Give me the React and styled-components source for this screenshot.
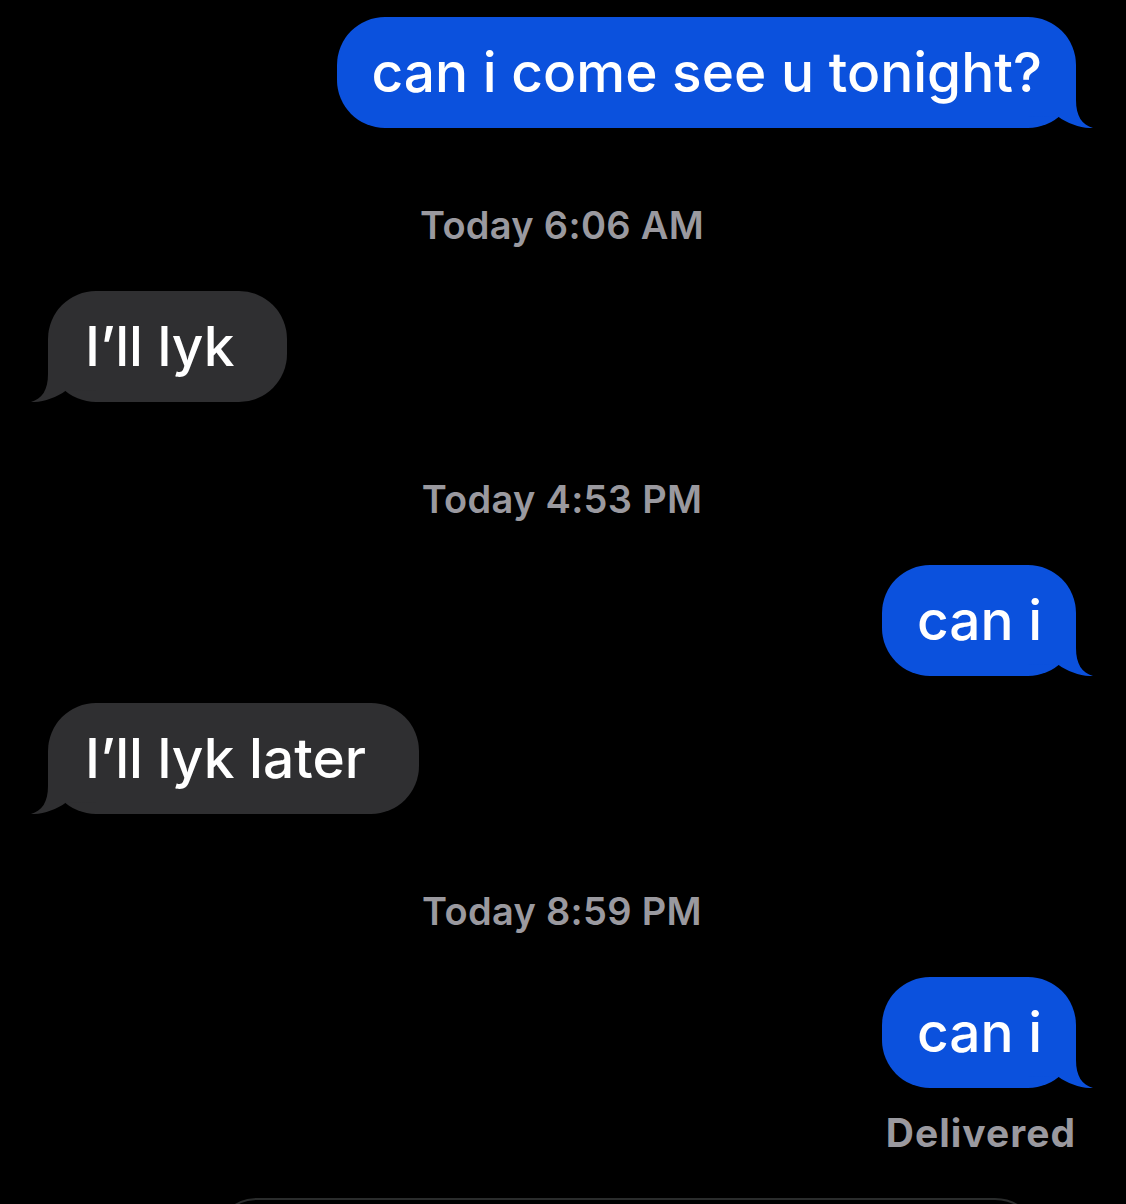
import styled, {createGlobalStyle} from 'styled-components';

const GlobalStyle = createGlobalStyle`
    html, body {
        margin: 0;
        padding: 0;
        background: #000;
    }
    body {
        font-family: Inter, Roboto, "Noto Sans", "Liberation Sans", sans-serif;
        -webkit-font-smoothing: antialiased;
    }
`;

const Thread = styled.div`
    display: flex;
    flex-direction: column;
    padding: 17px 50px 0 48px;
    min-height: 1204px;
    box-sizing: border-box;
    overflow: hidden;
`;

const Row = styled.div`
    display: flex;
    justify-content: ${p => (p.$me ? 'flex-end' : 'flex-start')};
    margin-top: ${p => p.$gap || 0}px;
`;

const Bubble = styled.div`
    position: relative;
    background: ${p => (p.$me ? '#0b51dd' : '#2f2f31')};
    color: #fff;
    font-size: 55px;
    font-weight: 500;
    letter-spacing: 0;
    line-height: 65px;
    padding: ${p => (p.$me ? '23px 34px 23px 35px' : '23px 53px 23px 37px')};
    border-radius: 48px;
    white-space: nowrap;
`;

const Text = styled.span`
    position: relative;
    z-index: 1;
`;

const Tail = styled.svg`
    position: absolute;
    z-index: 0;
    bottom: 0;
    width: 70px;
    height: 50px;
    ${p => (p.$me ? 'right: -20px;' : 'left: -20px; transform: scaleX(-1);')}
`;

const Stamp = styled.div`
    text-align: center;
    color: #9a999f;
    font-size: 38px;
    line-height: 44px;
    font-weight: 600;
    letter-spacing: 0.3px;
    margin: 75px 0 44px;
`;

const Status = styled.div`
    text-align: right;
    color: #9a999f;
    font-size: 39px;
    line-height: 44px;
    font-weight: 700;
    letter-spacing: 1px;
    margin-top: 23px;
`;

const Composer = styled.div`
    margin: 43px 36px 0 164px;
    height: 90px;
    border: 2px solid #2a2c2c;
    border-radius: 45px;
`;

const BubbleTail = ({me}) => (
    <Tail $me={me} viewBox="-50 -50 70 50">
        <path
            d="M 0 -48 L 0 -28 C 0 -12 6 -3 17 0 C 6 0.5 -8 -4 -18 -11.5 L -50 -11 L -50 -48 Z"
            fill={me ? '#0b51dd' : '#2f2f31'}
        />
    </Tail>
);

const Message = ({me, gap, children}) => (
    <Row $me={me} $gap={gap}>
        <Bubble $me={me}>
            <BubbleTail me={me}/>
            <Text>{children}</Text>
        </Bubble>
    </Row>
);

export default function App() {
    return (
        <>
            <GlobalStyle/>
            <Thread>
                <Message me>can i come see u tonight?</Message>
                <Stamp>Today 6:06 AM</Stamp>
                <Message>I’ll lyk</Message>
                <Stamp>Today 4:53 PM</Stamp>
                <Message me>can i</Message>
                <Message gap={27}>I’ll lyk later</Message>
                <Stamp>Today 8:59 PM</Stamp>
                <Message me>can i</Message>
                <Status>Delivered</Status>
                <Composer/>
            </Thread>
        </>
    );
}
